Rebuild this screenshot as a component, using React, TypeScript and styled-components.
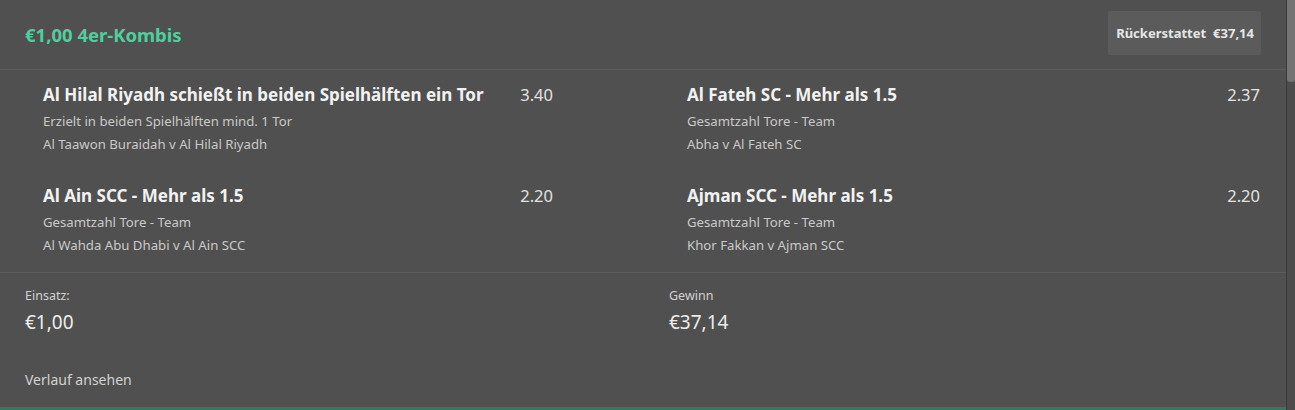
import React from "react";
import styled, { createGlobalStyle } from "styled-components";

const GlobalStyle = createGlobalStyle`
  html, body {
    margin: 0;
    padding: 0;
    background: #505050;
    font-family: "Noto Sans", "Open Sans", "Liberation Sans", sans-serif;
  }
`;

type Selection = {
  title: string;
  market: string;
  event: string;
  odds: string;
};

const selections: Selection[] = [
  {
    title: "Al Hilal Riyadh schießt in beiden Spielhälften ein Tor",
    market: "Erzielt in beiden Spielhälften mind. 1 Tor",
    event: "Al Taawon Buraidah v Al Hilal Riyadh",
    odds: "3.40",
  },
  {
    title: "Al Fateh SC - Mehr als 1.5",
    market: "Gesamtzahl Tore - Team",
    event: "Abha v Al Fateh SC",
    odds: "2.37",
  },
  {
    title: "Al Ain SCC - Mehr als 1.5",
    market: "Gesamtzahl Tore - Team",
    event: "Al Wahda Abu Dhabi v Al Ain SCC",
    odds: "2.20",
  },
  {
    title: "Ajman SCC - Mehr als 1.5",
    market: "Gesamtzahl Tore - Team",
    event: "Khor Fakkan v Ajman SCC",
    odds: "2.20",
  },
];

const Page = styled.div`
  display: flex;
  height: 410px;
  overflow: hidden;
`;

const Card = styled.main`
  flex: 1;
  display: flex;
  flex-direction: column;
  background: #505050;
  border-bottom: 3px solid #2f7b60;
  box-sizing: border-box;
  height: 410px;
`;

const Scrollbar = styled.div`
  width: 8px;
  border-left: 1px solid #3a3a3a;
  background: #4c4c4c;
  display: flex;
  flex-direction: column;
`;

const Thumb = styled.div`
  height: 82px;
  background: #747474;
  border-radius: 0 0 3px 3px;
`;

const Header = styled.header`
  height: 69px;
  display: flex;
  align-items: center;
  justify-content: space-between;
  padding: 0 25px;
  border-bottom: 1px solid #5c5c5c;
`;

const Title = styled.h2`
  margin: 0;
  color: #4fcf9f;
  font-size: 18.5px;
  font-weight: 700;
`;

const Badge = styled.div`
  height: 44px;
  margin-top: -3px;
  padding: 0 7px 0 8px;
  display: flex;
  align-items: center;
  gap: 7px;
  background: #5b5b5b;
  border-radius: 2px;
  color: #e6e6e6;
  font-size: 13px;
  font-weight: 700;
`;

const Grid = styled.section`
  display: grid;
  grid-template-columns: 510px 1fr;
  column-gap: 134px;
  row-gap: 29px;
  padding: 14px 26px 15px 43px;
  border-bottom: 1px solid #5c5c5c;
`;

const Item = styled.div`
  display: flex;
  flex-direction: column;
`;

const ItemHead = styled.div`
  display: flex;
  justify-content: space-between;
  align-items: baseline;
  height: 22px;
  margin-bottom: 4px;
`;

const ItemTitle = styled.span`
  color: #f2f2f2;
  font-size: 17px;
  font-weight: 700;
  line-height: 22px;
  white-space: nowrap;
`;

const Odds = styled.span`
  color: #e2e2e2;
  font-size: 16.5px;
  line-height: 22px;
`;

const Sub = styled.span`
  color: #c9c9c9;
  font-size: 13.2px;
  line-height: 23px;
`;

const Footer = styled.footer`
  display: grid;
  grid-template-columns: 1fr 1fr;
  column-gap: 52px;
  padding: 14px 25px 0;
`;

const Stat = styled.div`
  display: flex;
  flex-direction: column;
`;

const StatLabel = styled.span`
  color: #d0d0d0;
  font-size: 12.5px;
  line-height: 18px;
  margin-bottom: 5px;
`;

const StatValue = styled.span`
  color: #ececec;
  font-size: 19px;
  line-height: 24px;
`;

const HistoryLink = styled.a`
  display: block;
  margin: 36px 25px 0;
  color: #d2d2d2;
  font-size: 14px;
  line-height: 20px;
  text-decoration: none;
  cursor: pointer;
`;

export default function App() {
  return (
    <>
      <GlobalStyle />
      <Page>
        <Card>
          <Header>
            <Title>€1,00 4er-Kombis</Title>
            <Badge>
              <span>Rückerstattet</span>
              <span>€37,14</span>
            </Badge>
          </Header>
          <Grid>
            {selections.map((s) => (
              <Item key={s.title}>
                <ItemHead>
                  <ItemTitle>{s.title}</ItemTitle>
                  <Odds>{s.odds}</Odds>
                </ItemHead>
                <Sub>{s.market}</Sub>
                <Sub>{s.event}</Sub>
              </Item>
            ))}
          </Grid>
          <Footer>
            <Stat>
              <StatLabel>Einsatz:</StatLabel>
              <StatValue>€1,00</StatValue>
            </Stat>
            <Stat>
              <StatLabel>Gewinn</StatLabel>
              <StatValue>€37,14</StatValue>
            </Stat>
          </Footer>
          <HistoryLink>Verlauf ansehen</HistoryLink>
        </Card>
        <Scrollbar>
          <Thumb />
        </Scrollbar>
      </Page>
    </>
  );
}
